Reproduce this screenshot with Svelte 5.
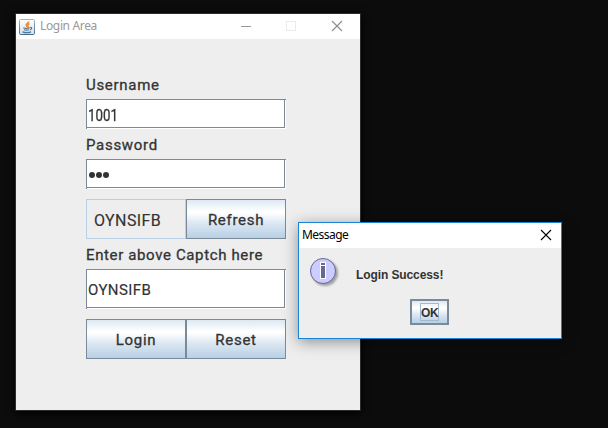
<script>
  let username = $state('1001');
  const captcha = 'OYNSIFB';
</script>

<div class="desktop">
  <section class="window login">
    <header>
      <svg class="java" width="16" height="16" viewBox="0 0 16 16">
        <defs>
          <linearGradient id="tile" x1="0" y1="0" x2="0" y2="1">
            <stop offset="0" stop-color="#ffffff" />
            <stop offset="1" stop-color="#d8dfe5" />
          </linearGradient>
          <linearGradient id="edge" x1="0" y1="0" x2="0" y2="1">
            <stop offset="0" stop-color="#9fb4c7" />
            <stop offset="1" stop-color="#466a8c" />
          </linearGradient>
        </defs>
        <rect x=".5" y=".5" width="15" height="15" rx="1.2" fill="url(#tile)" stroke="url(#edge)" />
        <path d="M9.6 2.2c.5 1.8-3 2.5-2.4 4 .2.7.9 1 .8 1.900M10.600 4.600c-1.400.6-2.200 1.200-1.700 2 .4.6.2 1-.2 1.500" fill="none" stroke="#ef8a2c" stroke-width="1.4" />
        <path d="M4.3 8.7c1.6.7 4.7.6 6.3-.1M5 10.7c1.5.5 3.7.5 5.1 0M11.2 8.5c2-.5 2 1.6-.2 2.2M3.5 12.9c2.5.9 6.5.8 8.5 0" fill="none" stroke="#4d7899" stroke-width="1.2" />
      </svg>
      <span class="title">Login Area</span>
      <span class="controls">
        <svg width="10" height="10" viewBox="0 0 10 10"><path d="M0 5.5h10" stroke="#999" /></svg>
        <svg width="10" height="10" viewBox="0 0 10 10"><rect x=".5" y=".5" width="9" height="9" fill="none" stroke="#ebebeb" /></svg>
        <svg class="close" width="10" height="10" viewBox="0 0 10 10"><path d="M0 0L10 10M10 0L0 10" stroke="#8c8c8c" stroke-width="1.1" /></svg>
      </span>
    </header>
    <div class="form">
      <div class="label"><span class="t-user">Username</span></div>
      <div class="field"><span class="t-num">{username}</span></div>
      <div class="label"><span class="t-pass">Password</span></div>
      <div class="field">
        <span class="dots"><i></i><i></i><i></i></span>
      </div>
      <div class="row">
        <div class="captcha"><span class="t-cap">{captcha}</span></div>
        <div class="button"><span class="t-refresh">Refresh</span></div>
      </div>
      <div class="label"><span class="t-enter">Enter above Captch here</span></div>
      <div class="field tall"><span class="t-code">{captcha}</span></div>
      <div class="row">
        <div class="button"><span class="t-login">Login</span></div>
        <div class="button"><span class="t-reset">Reset</span></div>
      </div>
    </div>
  </section>

  <section class="window dialog">
    <header>
      <span class="title">Message</span>
      <svg width="10" height="10" viewBox="0 0 10 10"><path d="M0 0L10 10M10 0L0 10" stroke="#000" stroke-width="1.1" /></svg>
    </header>
    <div class="message">
      <svg width="32" height="32" viewBox="0 0 32 32">
        <defs>
          <filter id="soft" x="-30%" y="-30%" width="160%" height="160%"><feGaussianBlur stdDeviation="1.3" /></filter>
        </defs>
        <circle cx="16" cy="16" r="13" fill="#777" opacity=".65" filter="url(#soft)" />
        <circle cx="14" cy="14" r="12.5" fill="#ccccff" stroke="#666699" />
        <path d="M11 5h6v17h-6z" fill="#fff" />
        <path d="M12 6h4v2h-4zM12 9h4v12h-4z" fill="#666699" />
      </svg>
      <span class="text">Login Success!</span>
    </div>
    <div class="ok"><span>OK</span></div>
  </section>
</div>

<style>
  :global(body) { margin: 0; }
  .desktop {
    position: relative;
    width: 608px;
    height: 428px;
    overflow: hidden;
    background: #0c0c0c;
    font-family: Roboto, "Liberation Sans", sans-serif;
    color: #333;
    white-space: nowrap;
  }
  .window { position: absolute; box-sizing: border-box; background: #eee; }
  header { display: flex; align-items: center; height: 25px; background: #fff; box-sizing: border-box; }
  .login {
    left: 15px; top: 13px; width: 346px; height: 398px;
    border: 1px solid #2b2d2e;
    box-shadow: 0 2px 8px #000;
  }
  .login header { padding: 0 18px 0 3px; }
  .title { font: 12px/16px "Noto Sans", sans-serif; }
  .login .title { margin: -1px 0 0 5px; color: #999; letter-spacing: -.35px; }
  .controls { display: flex; gap: 35px; margin: -1px 0 0 auto; }
  .controls .close { margin-left: 1px; }
  svg { display: block; flex: none; overflow: visible; }
  .form { width: 200px; margin: 30px 0 0 70px; font-size: 16px; -webkit-text-stroke: .3px #333; }
  .label { height: 30px; line-height: 31px; }
  .field {
    box-sizing: border-box;
    display: flex;
    align-items: center;
    height: 30px;
    padding: 2px 0 0 2px;
    background: #fff;
    box-shadow: inset 1px 1px #7a8a99, inset -1px -1px #fff, inset -2px -2px #7a8a99;
  }
  .field.tall { height: 40px; }
  .row { display: flex; height: 40px; margin: 10px 0 0; }
  .captcha, .button { box-sizing: border-box; width: 100px; display: flex; align-items: center; padding-top: 2px; }
  .captcha { border: 1px solid #b8cfe5; padding-left: 7px; }
  .button, .ok { justify-content: center; border: 1px solid #7a8a99; background: linear-gradient(#dde8f3, #fff 30%, #fff 34%, #dde8f3 60%, #b8cfe5); }
  .dots { display: flex; gap: 1px; margin: -1px 0 0 1px; }
  .dots i { width: 6px; height: 6px; border-radius: 50%; background: #333; }
  .t-user, .t-pass, .t-enter, .t-refresh, .t-login, .t-reset { font-size: 15px; letter-spacing: .7px; }
  .t-enter { letter-spacing: .63px; }
  .t-num { display: inline-block; transform: scaleX(.83); transform-origin: 0 50%; }
  .t-cap { letter-spacing: .4px; -webkit-text-stroke-width: .15px; }
  .t-code { font-size: 15px; letter-spacing: .4px; -webkit-text-stroke-width: .15px; }

  .dialog {
    left: 298px; top: 222px; width: 264px; height: 117px;
    border: 1px solid #1883d7;
    box-shadow: 0 3px 14px rgba(0, 0, 0, .4);
  }
  .dialog header { justify-content: space-between; padding: 0 10px 0 3px; }
  .dialog header svg { margin-top: -1px; }
  .dialog .title { margin-top: -1px; color: #000; letter-spacing: -.55px; }
  .message { display: flex; padding: 9px 0 0 10px; height: 33px; }
  .message .text { margin: 11px 0 0 15px; font: bold 12px/14px "Liberation Sans", sans-serif; letter-spacing: -.1px; }
  .ok {
    display: flex; box-sizing: border-box; align-items: center;
    width: 39px; height: 26px; margin: 9px 0 0 111px;
    border-width: 2px;
  }
  .ok span { box-sizing: border-box; width: 19px; height: 18px; border: 1px solid #a3b8cc; text-align: center; font: bold 12px/18px "Liberation Sans", sans-serif; letter-spacing: -.3px; }
</style>
